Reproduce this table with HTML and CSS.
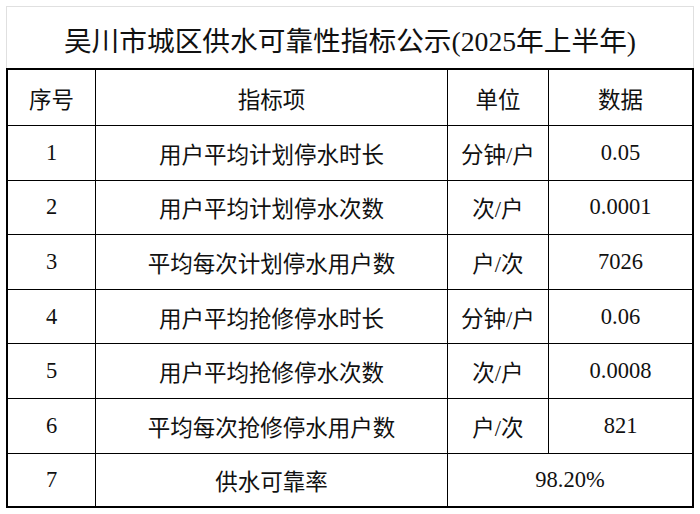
FILE: index.html
```html
<!DOCTYPE html>
<html lang="zh-CN">
<head>
<meta charset="utf-8">
<title>吴川市城区供水可靠性指标公示</title>
<link rel="stylesheet" href="styles.css">
</head>
<body>
<div class="sheet">
  <div class="title">吴川市城区供水可靠性指标公示(2025年上半年)</div>
  <div class="grid">
    <div class="cell">序号</div>
    <div class="cell">指标项</div>
    <div class="cell">单位</div>
    <div class="cell last-col">数据</div>

    <div class="cell">1</div>
    <div class="cell">用户平均计划停水时长</div>
    <div class="cell">分钟/户</div>
    <div class="cell last-col">0.05</div>

    <div class="cell">2</div>
    <div class="cell">用户平均计划停水次数</div>
    <div class="cell">次/户</div>
    <div class="cell last-col">0.0001</div>

    <div class="cell">3</div>
    <div class="cell">平均每次计划停水用户数</div>
    <div class="cell">户/次</div>
    <div class="cell last-col">7026</div>

    <div class="cell">4</div>
    <div class="cell">用户平均抢修停水时长</div>
    <div class="cell">分钟/户</div>
    <div class="cell last-col">0.06</div>

    <div class="cell">5</div>
    <div class="cell">用户平均抢修停水次数</div>
    <div class="cell">次/户</div>
    <div class="cell last-col">0.0008</div>

    <div class="cell">6</div>
    <div class="cell">平均每次抢修停水用户数</div>
    <div class="cell">户/次</div>
    <div class="cell last-col">821</div>

    <div class="cell last-row">7</div>
    <div class="cell last-row">供水可靠率</div>
    <div class="cell last-row last-col span-2">98.20%</div>
  </div>
</div>
</body>
</html>
```
FILE: styles.css
```css
* { box-sizing: border-box; }
html, body { margin: 0; padding: 0; background: #fff; }
body {
  font-family: "Liberation Serif", "Noto Sans CJK SC", serif;
  color: #111;
}
.sheet {
  margin: 6px 0 0 6px;
  width: 688px;
  border: 1px solid #e0e0e0;
  border-bottom: none;
}
.title {
  height: 61px;
  display: flex;
  align-items: center;
  justify-content: center;
  font-size: 27.7px;
  padding-top: 2px;
}
.grid {
  display: grid;
  grid-template-columns: 88px 352px 101px 1fr;
  grid-template-rows: 56px repeat(6, 54.6px) 52px;
  border: 2px solid #000;
  margin-left: -1px;
  margin-right: 0;
  width: 688px;
}
.cell {
  display: flex;
  align-items: center;
  justify-content: center;
  font-size: 22.5px;
  border-right: 1px solid #000;
  border-bottom: 1px solid #000;
}
.last-col { border-right: none; }
.last-row { border-bottom: none; }
.span-2 { grid-column: span 2; }
```
